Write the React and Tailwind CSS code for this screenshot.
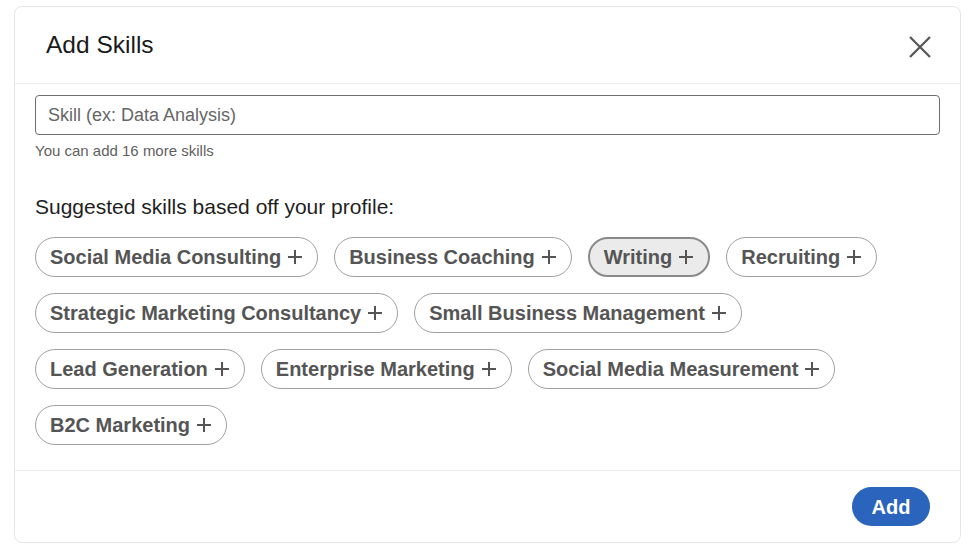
const skills = [
  "Social Media Consulting",
  "Business Coaching",
  "Writing",
  "Recruiting",
  "Strategic Marketing Consultancy",
  "Small Business Management",
  "Lead Generation",
  "Enterprise Marketing",
  "Social Media Measurement",
  "B2C Marketing",
]

function Plus() {
  return (
    <svg width="16" height="16" viewBox="0 0 16 16" className="shrink-0">
      <path d="M8 1v14M1 8h14" stroke="currentColor" strokeWidth="2" />
    </svg>
  )
}

function SkillPill({ label, active }) {
  return (
    <button
      className={
        active
          ? "h-10 flex items-center gap-[6px] pl-[14px] pr-[14px] rounded-full border-2 border-[#8a8a8a] bg-[#ebebeb] text-[20px] font-semibold text-[#555]"
          : "h-10 flex items-center gap-[6px] pl-[14px] pr-[14px] rounded-full border border-[#a0a0a0] bg-white text-[20px] font-semibold text-[#555]"
      }
    >
      <span>{label}</span>
      <Plus />
    </button>
  )
}

export default function App() {
  return (
    <div
      className="w-[980px] h-[551px] bg-white pl-[14px] pt-[6px]"
      style={{ fontFamily: "'Liberation Sans', Arial, sans-serif" }}
    >
      <div className="w-[947px] h-[537px] flex flex-col rounded-lg border border-[#e6e6e6] bg-white">
        <div className="h-[77px] shrink-0 flex items-center justify-between pl-[31px] pr-[28px] border-b border-[#ececec]">
          <h2 className="text-[24.5px] leading-[30px] text-[#1a1a1a]">Add Skills</h2>
          <svg width="24" height="24" viewBox="0 0 24 24" className="mt-1 text-[#555]">
            <path d="M2 2l20 20M22 2L2 22" stroke="currentColor" strokeWidth="2.2" />
          </svg>
        </div>

        <div className="flex-1 px-[20px] pt-[11px]">
          <input
            className="w-full h-10 rounded border border-[#6e6e6e] px-3 text-[18px] text-[#333] placeholder-[#666] outline-none"
            placeholder="Skill (ex: Data Analysis)"
          />
          <p className="mt-[7px] text-[15px] leading-[18px] text-[#5f5f5f]">You can add 16 more skills</p>

          <p className="mt-[35px] text-[21px] leading-[24px] text-[#1f1f1f]">Suggested skills based off your profile:</p>

          <div className="mt-[18px] flex flex-wrap gap-x-[16px] gap-y-4">
            {skills.map(s => (
              <SkillPill key={s} label={s} active={s === "Writing"} />
            ))}
          </div>
        </div>

        <div className="h-[72px] shrink-0 flex items-center justify-end pr-[30px] border-t border-[#ececec]">
          <button className="h-[39px] w-[78px] rounded-full bg-[#2a64bd] text-white text-[20px] font-bold">
            Add
          </button>
        </div>
      </div>
    </div>
  )
}
